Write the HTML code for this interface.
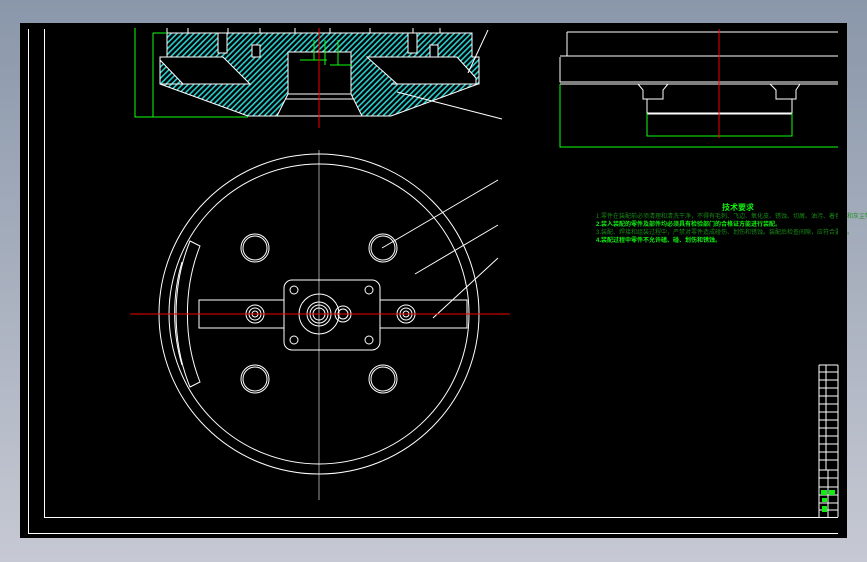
<!DOCTYPE html>
<html><head><meta charset="utf-8"><style>
html,body{margin:0;padding:0;width:867px;height:562px;overflow:hidden;background:linear-gradient(#8a97aa,#c6c9d3);}
svg{position:absolute;left:0;top:0}
</style></head><body>
<svg width="867" height="562" viewBox="0 0 867 562" xmlns="http://www.w3.org/2000/svg">
<defs>
<pattern id="h" width="4" height="4" patternUnits="userSpaceOnUse" patternTransform="rotate(45)">
<rect width="4" height="4" fill="#000"/><rect width="1.6" height="4" fill="#2ad0d0"/></pattern>
</defs>
<rect x="20" y="23" width="827" height="515" fill="#000"/>
<g stroke="#fff" fill="none" stroke-width="1">
<path d="M28.5 29V533.5H838"/>
<path d="M44.5 29V517.5H838"/>
</g>
<!-- top section view -->
<g stroke="#fff" stroke-width="1">
<path d="M167 33H472V57H479V84H478L391 116H248L160 84V57H167Z" fill="url(#h)"/>
<path d="M160 60L160 57H223L250 84H183Z" fill="#000"/>
<path d="M367 57H457L476 78V84H397Z" fill="#000"/>
<path d="M288 52H351V94L362 116H277L288 94Z" fill="#000"/>
<path d="M160 84H248" fill="none"/>
<path d="M391 84H478" fill="none"/>
<path d="M288 94H351M285 99H353" fill="none"/>
<path d="M167 33V28M188 33V28M228 33V28M260 33V28M295 33V28M330 33V28M370 33V28M413 33V28M440 33V28" />
<rect x="218" y="33" width="9" height="20" fill="#000"/>
<rect x="252" y="45" width="8" height="12" fill="#000"/>
<rect x="408" y="33" width="9" height="20" fill="#000"/>
<rect x="430" y="45" width="8" height="12" fill="#000"/>
<path d="M468 73L488 30M397 92L502 119" fill="none"/>
</g>
<path d="M135 28V117H248M153 33V117M153 33H167" stroke="#1f1" fill="none"/>
<path d="M314 40V60M325 40V65M338 40V65M300 60H327M330 65H352" stroke="#1f1"/>
<line x1="319" y1="28" x2="319" y2="128" stroke="#e00"/>
<!-- top right view -->
<g stroke="#fff" fill="none">
<path d="M567 32V56M567 32H838M560 56H838M560 57V82H838M560 84H838"/>
<path d="M638 84L643 90V99H663V90L668 84M770 84L776 90V99H796V90L800 84"/>
<path d="M647 99V113H792V99M647 114H792"/>
</g>
<path d="M560 84V147H838M647 113V136H792V113" stroke="#1f1" fill="none"/>
<line x1="719" y1="29" x2="719" y2="138" stroke="#e00"/>
<!-- text -->
<g font-family="Liberation Sans,Noto Sans CJK SC,sans-serif" font-size="6" fill="#1e1">
<text x="722" y="210" font-size="8" font-weight="bold">技术要求</text>
<text x="596" y="218" fill="#1a8a1a">1.零件在装配前必须清理和清洗干净，不得有毛刺、飞边、氧化皮、锈蚀、切屑、油污、着色剂和灰尘等。</text>
<text x="596" y="226" font-weight="bold">2.装入装配的零件及部件均必须具有检验部门的合格证方能进行装配。</text>
<text x="596" y="234" fill="#1a8a1a">3.装配、焊接和组装过程中，严禁对零件造成碰伤、划伤和锈蚀。装配后检查间隙，应符合要求。</text>
<text x="596" y="242" font-weight="bold">4.装配过程中零件不允许磕、碰、划伤和锈蚀。</text>
</g>
<rect x="838" y="200" width="9" height="50" fill="#000"/>
<!-- plan view -->
<g stroke="#fff" fill="none" stroke-width="1">
<circle cx="319" cy="314" r="160"/>
<circle cx="319" cy="314" r="150"/>
<path d="M190 241A110 150 0 0 0 190 387L200 382A100 140 0 0 1 200 246Z"/>
<path d="M182 262A90 130 0 0 0 182 365"/>
<circle cx="255" cy="248" r="14"/><circle cx="255" cy="248" r="12"/>
<circle cx="383" cy="248" r="14"/><circle cx="383" cy="248" r="12"/>
<circle cx="255" cy="379" r="14"/><circle cx="255" cy="379" r="12"/>
<circle cx="383" cy="379" r="14"/><circle cx="383" cy="379" r="12"/>
<rect x="199" y="300" width="268" height="28"/>
<rect x="284" y="280" width="96" height="70" rx="8" fill="#000"/>
<circle cx="294" cy="290" r="4"/><circle cx="369" cy="290" r="4"/>
<circle cx="294" cy="340" r="4"/><circle cx="369" cy="340" r="4"/>
<circle cx="319" cy="314" r="20"/><circle cx="319" cy="314" r="12"/><circle cx="319" cy="314" r="9"/><circle cx="319" cy="314" r="6"/>
<circle cx="343" cy="314" r="8"/><circle cx="343" cy="314" r="5"/>
<circle cx="255" cy="314" r="9"/><circle cx="255" cy="314" r="6"/><circle cx="255" cy="314" r="3"/>
<circle cx="406" cy="314" r="9"/><circle cx="406" cy="314" r="6"/><circle cx="406" cy="314" r="3"/>
<path d="M382 248L498 180M415 274L498 225M433 318L498 258"/>
</g>
<line x1="319" y1="150" x2="319" y2="500" stroke="#fff" stroke-width="0.6"/>
<line x1="130" y1="314" x2="510" y2="314" stroke="#e00"/>
<!-- title block -->
<g stroke="#fff" fill="none">
<path d="M819 365V517M826 365V470M838 365V517M819 365H838"/>
<path d="M819 372H838M819 380H838M819 388H838M819 396H838M819 404H838M819 412H838M819 420H838M819 428H838M819 436H838M819 444H838M819 452H838M819 460H838M819 470H838M819 478H838M819 487H838M819 495H838M819 503H838M819 510H838M828 470V517"/>
</g>
<rect x="821" y="490" width="6" height="5" fill="#1e1"/><rect x="829" y="490" width="6" height="5" fill="#1e1"/>
<rect x="822" y="498" width="5" height="4" fill="#1e1"/><rect x="822" y="506" width="5" height="6" fill="#1e1"/>
</svg>
</body></html>
